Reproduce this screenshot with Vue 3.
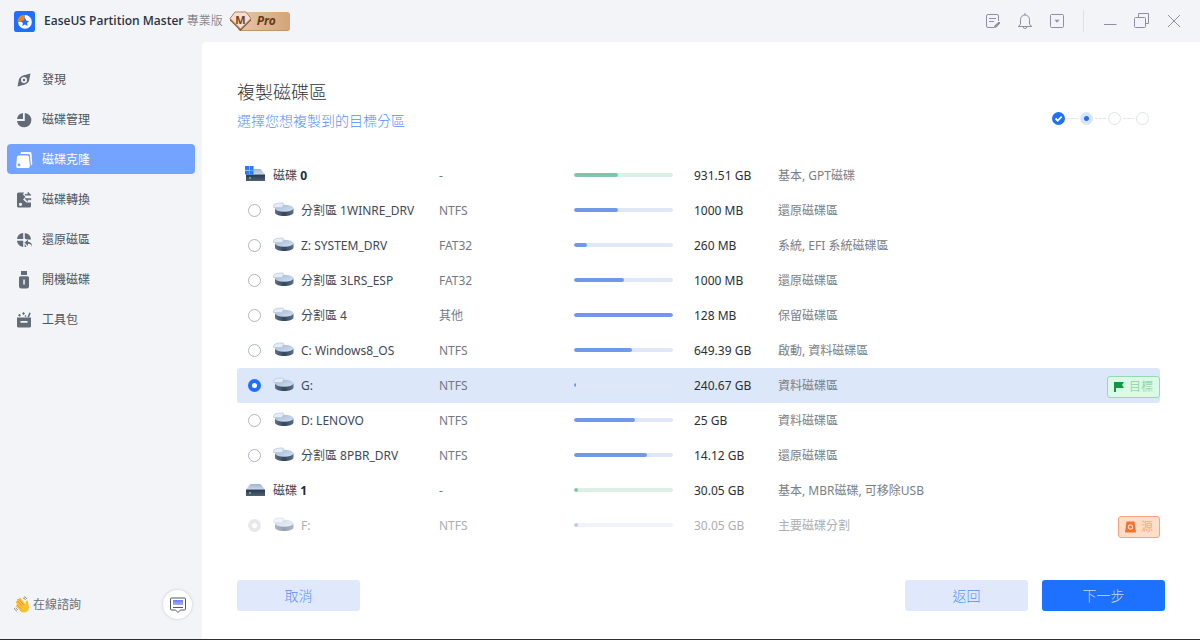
<script setup>
import { ref } from 'vue'

const nav = [
  { id: 'discover', label: '發現' },
  { id: 'manage', label: '磁碟管理' },
  { id: 'clone', label: '磁碟克隆' },
  { id: 'convert', label: '磁碟轉換' },
  { id: 'restore', label: '還原磁區' },
  { id: 'boot', label: '開機磁碟' },
  { id: 'tools', label: '工具包' }
]
const active = ref('clone')
const selected = ref('p5')

const rows = [
  { id: 'd0', disk: true, system: true, name: '磁碟', num: '0', fs: '-', used: 44, size: '931.51 GB', type: '基本, GPT磁碟' },
  { id: 'p0', name: '分割區 1WINRE_DRV', fs: 'NTFS', used: 44, size: '1000 MB', type: '還原磁碟區' },
  { id: 'p1', name: 'Z: SYSTEM_DRV', fs: 'FAT32', used: 13, size: '260 MB', type: '系統, EFI 系統磁碟區' },
  { id: 'p2', name: '分割區 3LRS_ESP', fs: 'FAT32', used: 50, size: '1000 MB', type: '還原磁碟區' },
  { id: 'p3', name: '分割區 4', fs: '其他', used: 100, size: '128 MB', type: '保留磁碟區' },
  { id: 'p4', name: 'C: Windows8_OS', fs: 'NTFS', used: 59, size: '649.39 GB', type: '啟動, 資料磁碟區' },
  { id: 'p5', name: 'G:', fs: 'NTFS', used: 2, size: '240.67 GB', type: '資料磁碟區' },
  { id: 'p6', name: 'D: LENOVO', fs: 'NTFS', used: 62, size: '25 GB', type: '資料磁碟區' },
  { id: 'p7', name: '分割區 8PBR_DRV', fs: 'NTFS', used: 74, size: '14.12 GB', type: '還原磁碟區' },
  { id: 'd1', disk: true, name: '磁碟', num: '1', fs: '-', used: 4, size: '30.05 GB', type: '基本, MBR磁碟, 可移除USB' },
  { id: 'p8', name: 'F:', source: true, fs: 'NTFS', used: 4, size: '30.05 GB', type: '主要磁碟分割' }
]
</script>

<template>
  <div class="window" lang="zh-Hant">
    <svg class="defs" width="0" height="0" aria-hidden="true">
      <defs>
        <linearGradient id="lid" x1="0" y1="0" x2="1" y2="1">
          <stop offset="0" stop-color="#a3b9d8" /><stop offset="1" stop-color="#d3e0f0" />
        </linearGradient>
        <linearGradient id="body" x1="0" y1="0" x2="1" y2="0">
          <stop offset="0" stop-color="#5d7189" /><stop offset=".5" stop-color="#34465c" /><stop offset="1" stop-color="#5d7189" />
        </linearGradient>
        <linearGradient id="top" x1="0" y1="0" x2="0" y2="1">
          <stop offset="0" stop-color="#9fb6d8" /><stop offset="1" stop-color="#c8d8ec" />
        </linearGradient>
        <linearGradient id="front" x1="0" y1="0" x2="0" y2="1">
          <stop offset="0" stop-color="#28374a" /><stop offset="1" stop-color="#506279" />
        </linearGradient>
        <linearGradient id="chat" x1="0" y1="0" x2="0" y2="1">
          <stop offset="0" stop-color="#6f7bf5" /><stop offset="1" stop-color="#a5aefb" />
        </linearGradient>
      </defs>
    </svg>

    <header class="titlebar">
      <svg class="logo" width="21" height="21" viewBox="0 0 22 22" aria-hidden="true">
        <rect width="22" height="22" rx="3" fill="#1e70ff" />
        <circle cx="11.5" cy="11.5" r="7.2" fill="#fff" />
        <path d="M11 11H3.5A7.5 7.5 0 0 1 11 3.6Z" fill="#f5840f" stroke="#1e70ff" stroke-width=".5" />
        <path d="M11.5 7.2l1.3 2.8 3.1.4-2.3 2.1.6 3.1-2.7-1.5-2.8 1.5.6-3.1-2.2-2.1 3.1-.4Z" fill="#1e70ff" />
      </svg>
      <h1><b>EaseUS Partition Master</b> 專業版</h1>
      <div class="pro">
        <svg width="23" height="21" viewBox="0 0 23 21" aria-hidden="true">
          <path d="M6 1h11l5 6.500v2L11.500 20 1 9.500v-2Z" fill="#8b5838" />
          <path d="M6 1h11l5 6.500L11.500 18 1 7.500Z" fill="#f3dfcd" stroke="#b58560" stroke-width="1" />
          <text x="11.500" y="13" text-anchor="middle">M</text>
        </svg>
        <span>Pro</span>
      </div>
      <div class="tools">
        <button aria-label="記錄">
          <svg width="18" height="18" viewBox="0 0 18 18"><path d="M10 15.500H4a1.500 1.500 0 0 1-1.500-1.500v-10A1.500 1.500 0 0 1 4 2.500h9A1.500 1.500 0 0 1 14.500 4V9M5 6.500h7M5 9.500h5" /><path d="M10.500 15.500l.5-2 4-3.500 1 1-3.700 4Z" fill="#8d8fa8" /></svg>
        </button>
        <button aria-label="通知">
          <svg width="18" height="18" viewBox="0 0 18 18"><path d="M2 14.500h14M4.500 12V7.500a4.500 4.500 0 0 1 9 0V12M7 14.500a2 2 0 0 0 4 0M9 3V1M4.500 12L2.500 14.500M13.500 12l2 2.500" /></svg>
        </button>
        <button aria-label="選單">
          <svg width="18" height="18" viewBox="0 0 18 18"><rect x="2.500" y="2.500" width="13" height="13" rx="1" /><path d="M6.500 7.800h5L9 10.800Z" fill="#8d8fa8" stroke="none" /></svg>
        </button>
        <i class="divider"></i>
        <button aria-label="最小化"><svg width="18" height="18" viewBox="0 0 18 18"><path d="M3 12.500h12.500" /></svg></button>
        <button aria-label="還原視窗">
          <svg width="18" height="18" viewBox="0 0 18 18"><path d="M5.500 5.500V1.500h10v10h-3" /><rect x="1.500" y="5.500" width="11" height="10" rx="1" /></svg>
        </button>
        <button aria-label="關閉"><svg width="18" height="18" viewBox="0 0 18 18"><path d="M3 3l12 12M15 3L3 15" /></svg></button>
      </div>
    </header>

    <aside class="sidebar">
      <nav>
        <button v-for="n in nav" :key="n.id" :class="{ on: n.id === active }" @click="active = n.id">
          <svg width="18" height="18" viewBox="0 0 18 18" fill="currentColor" aria-hidden="true">
            <path v-if="n.id === 'discover'" fill-rule="evenodd" d="M15.500 2.500L14 10Q13 12.500 10 13.500L2.500 15.500 4 8Q5 5.500 8 4.500ZM9 6A3 3 0 1 0 9 12 3 3 0 1 0 9 6ZM9 7.800a1.200 1.200 0 1 1 0 2.400 1.200 1.200 0 1 1 0-2.400Z" />
            <template v-else-if="n.id === 'manage'">
              <path d="M9.800 2A7.200 7.200 0 1 1 2 10h7.800Z" />
              <path d="M8 2v6H2A7 7 0 0 1 8 2Z" />
            </template>
            <template v-else-if="n.id === 'clone'">
              <path d="M6 1h9A1.500 1.500 0 0 1 16.500 2.500l.8 11-1.500 1L15 4 14 3H5.500Z" />
              <path fill-rule="evenodd" d="M3.500 4.500h9A1.500 1.500 0 0 1 14 6l.8 9a1.700 1.700 0 0 1-1.700 2H3a1.700 1.700 0 0 1-1.800-2L2 6A1.500 1.500 0 0 1 3.500 4.500ZM4 12.500A1.400 1.400 0 1 0 4 15.300 1.400 1.400 0 1 0 4 12.500Z" />
            </template>
            <template v-else-if="n.id === 'convert'">
              <path fill-rule="evenodd" d="M3.500 1.500H9L8 3.500l2.500 2.500L8 8.500l3.500 3H16v3.500a1.500 1.500 0 0 1-1.500 1.500h-11A1.500 1.500 0 0 1 2 15V3A1.500 1.500 0 0 1 3.500 1.500ZM5.500 11.700a1.600 1.600 0 1 0 0 3.200 1.600 1.600 0 1 0 0-3.200Z" />
              <path d="M10 3.300h3V1l3 3.200H10ZM16 7.500h-6l2.500 3V8.800H16Z" stroke="currentColor" stroke-width=".5" />
            </template>
            <template v-else-if="n.id === 'restore'">
              <path d="M8.200 2v6H2A7 7 0 0 1 8.200 2ZM9.800 2A7 7 0 0 1 16 8.500H12l-2.200-1ZM2 9.800h6.200V16A7 7 0 0 1 2 9.800ZM9.700 12.500l1.800 3.500H9.700Z" />
              <path d="M17 16c-.4-2.500-1.500-3.300-4-3.300V15l-3.500-3.500L13 8.800v1.900c3 .2 4.300 2.200 4 5.300Z" />
            </template>
            <template v-else-if="n.id === 'boot'">
              <path d="M6 0h6v4H6Z" />
              <path fill-rule="evenodd" d="M5.500 5.300h7A1.500 1.500 0 0 1 14 6.800V15a2.500 2.500 0 0 1-2.500 2.500h-5A2.500 2.500 0 0 1 4 15V6.800A1.500 1.500 0 0 1 5.500 5.300ZM8.300 8.500v5h1.500v-5Z" />
            </template>
            <template v-else>
              <path fill-rule="evenodd" d="M2 6.500h14V15a1.500 1.500 0 0 1-1.500 1.500h-11A1.500 1.500 0 0 1 2 15ZM5.500 10v1.700h7V10Z" />
              <path d="M12.500 6l1.800-4.500 1.400.5L14 6.500ZM3 4.300l1.500-1.500L6 4.300 4.500 5.800ZM7 2.500L8.500 1 10 2.500 8.500 4ZM9.500 5l1-1 1 1-1 1Z" />
            </template>
          </svg>
          {{ n.label }}
        </button>
      </nav>
      <div class="consult">
        <a href="#">
          <svg width="18" height="18" viewBox="0 0 18 18" aria-hidden="true">
            <path d="M4 9L2.800 5.500Q3.500 4.300 4.500 5L3.800 3.300Q5 2 6 3.300L6.300 2.200Q7.500 1.300 8.300 2.800L12.500 8.500 12.800 5Q14.500 3.500 15 5.800L16 11.500Q15.500 16.500 10.500 16.500 7.500 16.500 5.800 13L3 10.200Q3 9 4 9Z" fill="#fbc02f" />
            <path d="M4.500 5l4.500 5.500M6 3.300l4.700 5.700M4 9l3.500 3.500" stroke="#e2912b" stroke-width=".8" fill="none" />
            <path d="M10 2q2 .3 2.500 2M11 .8q2.300.3 3 2.200M1.300 12q.5 2.200 2.500 3M3 11.500q.3 1.500 1.800 2.200" stroke="#8e9299" stroke-width="1" fill="none" />
          </svg>
          在線諮詢
        </a>
        <button class="bubble" aria-label="在線諮詢">
          <svg width="18" height="18" viewBox="0 0 18 18" aria-hidden="true">
            <path d="M2.500 2h13a1 1 0 0 1 1 1v10a1 1 0 0 1-1 1H11.500L9 16.500 6.500 14h-4a1 1 0 0 1-1-1V3a1 1 0 0 1 1-1Z" fill="#fff" stroke="#555963" stroke-width="1" />
            <path d="M4 4h10v5H4Z" fill="url(#chat)" /><path d="M4 11.500h10" stroke="#555963" stroke-width="1" />
          </svg>
        </button>
      </div>
    </aside>

    <main>
      <div class="heading">
        <div>
          <h2>複製磁碟區</h2>
          <p>選擇您想複製到的目標分區</p>
        </div>
        <ol class="steps" aria-label="步驟">
          <li class="done"><svg width="13" height="13" viewBox="0 0 13 13"><path d="M3.500 6.500l2.200 2.200 4-4" fill="none" stroke="#fff" stroke-width="1.800" /></svg></li>
          <li class="current"></li>
          <li></li>
          <li></li>
        </ol>
      </div>

      <table>
        <colgroup><col class="c-name" /><col class="c-fs" /><col class="c-bar" /><col class="c-size" /><col /><col class="c-tag" /></colgroup>
        <tbody>
          <tr v-for="r in rows" :key="r.id" :class="{ disk: r.disk, picked: r.id === selected, source: r.source }">
            <td>
              <div v-if="r.disk" class="name">
                <svg width="21" height="18" viewBox="0 0 21 18" aria-hidden="true">
                  <path d="M5.500 3h10L20 8.500H1Z" fill="url(#top)" />
                  <path d="M1 8.500h19v6.500H1Z" fill="url(#front)" />
                  <circle cx="5" cy="12" r=".9" fill="#5fdc83" />
                  <path v-if="r.system" d="M0 0h4v4H0ZM4.500 0h4v4h-4ZM0 4.500h4v4H0ZM4.500 4.500h4v4h-4Z" fill="#2b7bff" />
                </svg>
                <span>{{ r.name }} <b>{{ r.num }}</b></span>
              </div>
              <label v-else class="name part">
                <input v-model="selected" type="radio" name="partition" :value="r.id" :disabled="r.source" />
                <svg width="21" height="16" viewBox="0 0 21 16" aria-hidden="true">
                  <path d="M2 6.500v4c0 2 4 3.500 9.200 3.500s9.300-1.500 9.300-3.500v-4Z" fill="url(#body)" />
                  <ellipse cx="11.200" cy="6.300" rx="9.300" ry="3.500" fill="url(#lid)" />
                  <path d="M.5 4Q.8 1.200 8 1h2.200v2.500L8.500 5.500H.5Z" fill="#e4ecf6" stroke="#b7c6da" stroke-width=".7" />
                </svg>
                <span>{{ r.name }}</span>
              </label>
            </td>
            <td class="fs">{{ r.fs }}</td>
            <td><div class="bar"><i :style="{ width: r.used + '%' }"></i></div></td>
            <td class="size">{{ r.size }}</td>
            <td class="type">{{ r.type }}</td>
            <td class="tagcell">
              <span v-if="r.id === selected" class="tag target">
                <svg width="10" height="12" viewBox="0 0 10 12" aria-hidden="true"><path d="M0 1h10L8 4l2 3H2v4H0Z" fill="#0b9a3f" /></svg>目標
              </span>
              <span v-if="r.source" class="tag src">
                <svg width="11" height="12" viewBox="0 0 11 12" aria-hidden="true"><path d="M1.500.5h8L11 11.500H0Z" fill="#fb6f2d" /><circle cx="5.500" cy="6" r="2.100" fill="none" stroke="#ffd9c4" stroke-width="1.200" /></svg>源
              </span>
            </td>
          </tr>
        </tbody>
      </table>

      <footer>
        <button class="light">取消</button>
        <div class="right">
          <button class="light">返回</button>
          <button class="primary">下一步</button>
        </div>
      </footer>
    </main>
  </div>
</template>

<style>
body { margin: 0; }
</style>

<style scoped>
* { box-sizing: border-box; }
.window {
  display: grid;
  grid-template-columns: 202px 1fr;
  grid-template-rows: 42px 1fr;
  min-height: 100vh;
  background: #f2f4f8;
  border-bottom: 1px solid #2a2e36;
  font: 12px/18px "Noto Sans", "Noto Sans CJK TC", sans-serif;
  color: #39414f;
}
.defs { position: absolute; }
button { font: inherit; border: 0; background: none; padding: 0; cursor: pointer; }
h1, h2, p, ol { margin: 0; padding: 0; font-weight: 400; }
svg { flex: none; display: block; }

.titlebar { grid-column: 1 / 3; display: flex; align-items: center; padding: 0 17px 0 14px; }
h1 { margin-left: 9px; font-size: 12px; font-weight: 300; color: #5c626d; }
h1 b { font-family: "Open Sans", sans-serif; font-weight: 600; color: #2c3442; }
.pro { display: flex; align-items: center; margin-left: 6px; }
.pro svg { position: relative; z-index: 1; }
.pro text { font: 700 11px "Noto Sans", sans-serif; fill: #743f1d; }
.pro span {
  margin-left: -14px;
  padding-left: 19px;
  width: 52px;
  height: 19px;
  border-radius: 3px;
  background: linear-gradient(90deg, #e6c6a8, #d3a578);
  border-bottom: 1px solid #c0946b;
  font: italic 700 12px/18px "Noto Sans", sans-serif;
  color: #663b1c;
}
.tools { margin-left: auto; display: flex; align-items: center; gap: 14px; }
.tools svg { fill: none; stroke: #8d8fa8; stroke-width: 1; }
.divider { width: 1px; height: 22px; margin: 0 3px; background: #dfe1e8; }

.sidebar { display: flex; flex-direction: column; justify-content: space-between; padding: 22px 7px 20px; }
nav { display: flex; flex-direction: column; gap: 10px; }
nav button {
  display: flex;
  align-items: center;
  gap: 9px;
  height: 30px;
  padding: 2px 8px 0;
  border-radius: 4px;
  color: #4d535d;
}
nav svg { color: #636b78; }
nav .on { background: #74a3ff; color: #fff; }
nav .on svg { color: #fff; }
.consult { display: flex; align-items: center; justify-content: space-between; padding: 0 3px 0 6px; }
.consult a { display: flex; align-items: center; gap: 2px; color: #6a6f78; text-decoration: none; }
.bubble {
  display: grid;
  place-items: center;
  width: 29px;
  height: 29px;
  border-radius: 50%;
  background: #fff;
  box-shadow: 0 0 3px #c3c6cf;
}

main { display: flex; flex-direction: column; padding: 36px 35px 28px; background: #fff; border-top-left-radius: 5px; }
.heading { display: flex; justify-content: space-between; margin-bottom: 25px; }
h2 { font-size: 18px; font-weight: 300; line-height: 28px; color: #333; }
.heading p { margin-top: 3px; font-size: 14px; font-weight: 300; line-height: 24px; color: #5590fd; }
.steps { display: flex; gap: 15px; margin: 34px 16px 0 0; list-style: none; }
.steps li {
  position: relative;
  width: 13px;
  height: 13px;
  border: 1px solid #e0e3f0;
  border-radius: 50%;
}
.steps li + li::before {
  content: "";
  position: absolute;
  left: -14px;
  top: 5px;
  width: 11px;
  border-top: 1px dashed #e0e3f0;
}
.steps .done { border: 0; background: #1e70ff; }
.steps .current { border-color: #dce5f8; background: radial-gradient(circle, #1e70ff 2px, #dce5f8 3px); }

table { width: calc(100% - 5px); table-layout: fixed; border-collapse: collapse; }
.c-name { width: 202px; }
.c-fs { width: 135px; }
.c-bar { width: 120px; }
.c-size { width: 84px; }
.c-tag { width: 80px; }
td { height: 35px; padding: 0; }
.name { display: flex; align-items: center; gap: 7px; padding-left: 8px; white-space: pre; }
.name svg { margin-bottom: 2px; }
.disk b { color: #222a36; }
.part { padding-left: 11px; color: #3f4856; }
.part input {
  appearance: none;
  width: 13px;
  height: 13px;
  margin: 0 5px 0 0;
  border: 1px solid #aeb5c2;
  border-radius: 50%;
  background: #fff;
}
.part input:checked { border: 4px solid #1e70ff; }
.part input:disabled { border: 4px solid #e7e8ec; }
.fs { color: #737984; }
.bar { width: 99px; height: 4px; margin-bottom: 2px; border-radius: 2px; background: #e0e8f7; overflow: hidden; }
.bar i { display: block; height: 4px; border-radius: 2px; background: #7099ea; }
.disk .bar { background: #dcf0e6; }
.disk .bar i { background: #80c5ab; }
.size { color: #2b2e35; }
.type { color: #7b7e85; }
.picked td { background: #dce7f9; }
.picked td:first-child { border-radius: 3px 0 0 3px; }
.picked td:last-child { border-radius: 0 3px 3px 0; }
.source .name svg, .source .bar { opacity: .5; }
.source .name, .source .size, .source .fs, .source .type { color: #abaeb4; }
.tagcell { padding-top: 3px; }
.tag {
  display: flex;
  align-items: center;
  gap: 5px;
  width: fit-content;
  height: 22px;
  margin-left: auto;
  padding: 0 6px;
  border: 1px solid;
  border-radius: 3px;
}
.target { background: #dcf8e6; border-color: #93dcae; color: #97d9ad; }
.src { background: #ffdec9; border-color: #fba27c; color: #fda888; }

footer { display: flex; justify-content: space-between; margin-top: auto; }
.right { display: flex; gap: 14px; }
footer button { width: 123px; height: 31px; border-radius: 3px; font-size: 14px; font-weight: 300; }
.light { background: #e0e9fc; color: #5590fd; }
.primary { background: #1e70ff; color: #c4d9ff; }
</style>
